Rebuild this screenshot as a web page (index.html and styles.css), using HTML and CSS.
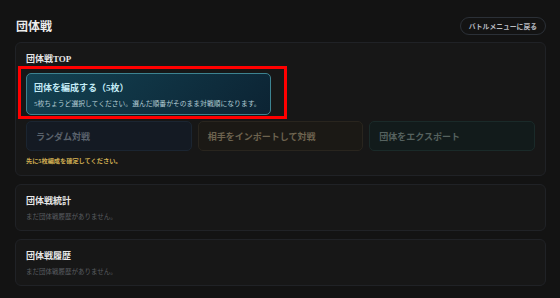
FILE: index.html
```html
<!DOCTYPE html>
<html lang="ja">
<head>
    <meta charset="UTF-8">
    <meta name="viewport" content="width=device-width, initial-scale=1.0">
    <title>団体戦</title>
    <link rel="stylesheet" href="styles.css">
</head>
<body>
    <div class="page">
        <header class="page-header">
            <h1>団体戦</h1>
            <button class="back-button">バトルメニューに戻る</button>
        </header>

        <section class="card">
            <h2 class="card-title">団体戦TOP</h2>
            <div class="compose-wrap">
                <button class="compose-button">
                    <span class="compose-title">団体を編成する（5枚）</span>
                    <span class="compose-sub">5枚ちょうど選択してください。選んだ順番がそのまま対戦順になります。</span>
                </button>
                <div class="highlight"></div>
            </div>
            <div class="action-row">
                <button class="action action-random">ランダム対戦</button>
                <button class="action action-import">相手をインポートして対戦</button>
                <button class="action action-export">団体をエクスポート</button>
            </div>
            <p class="notice">先に5枚編成を確定してください。</p>
        </section>

        <section class="card card-small">
            <h2 class="card-title">団体戦統計</h2>
            <p class="empty">まだ団体戦履歴がありません。</p>
        </section>

        <section class="card card-small">
            <h2 class="card-title">団体戦履歴</h2>
            <p class="empty">まだ団体戦履歴がありません。</p>
        </section>
    </div>
</body>
</html>
```

FILE: styles.css
```css
* {
    margin: 0;
    padding: 0;
    box-sizing: border-box;
}

body {
    font-family: "Liberation Serif", "Noto Sans CJK JP", serif;
    background: #131313;
    color: #e6e6e6;
}

.page {
    padding: 17px 14px 0 15px;
}

.page-header {
    display: flex;
    align-items: center;
    justify-content: space-between;
    height: 18px;
    margin-bottom: 7px;
}

h1 {
    font-size: 12px;
    font-weight: bold;
    color: #ececec;
    margin-left: 1px;
}

.back-button {
    height: 18px;
    padding: 0 8px;
    border: 1px solid #2b3037;
    border-radius: 9px;
    background: transparent;
    color: #b9bcc1;
    font-family: inherit;
    font-size: 6.8px;
    font-weight: bold;
}

.card {
    background: #171717;
    border: 1px solid #202226;
    border-radius: 6px;
    padding: 9px 10px 9px 10px;
    margin-bottom: 8px;
}

.card-title {
    font-size: 9px;
    font-weight: bold;
    color: #e8e8e8;
    line-height: 14px;
}

.compose-wrap {
    position: relative;
    width: 245px;
    margin-top: 7px;
}

.compose-button {
    display: flex;
    flex-direction: column;
    justify-content: center;
    gap: 4px;
    width: 100%;
    height: 42px;
    padding: 0 7px;
    text-align: left;
    border: 1px solid #3d8391;
    border-radius: 5px;
    background: linear-gradient(135deg, #134252, #0c2333);
    font-family: inherit;
    white-space: nowrap;
}

.compose-title {
    font-size: 9px;
    font-weight: bold;
    color: #c4ecf7;
}

.compose-sub {
    font-size: 6.8px;
    color: #b3ccd4;
}

.highlight {
    position: absolute;
    top: -7px;
    left: -8px;
    right: -16px;
    bottom: -4px;
    border: 3px solid #ff0000;
    pointer-events: none;
}

.action-row {
    display: grid;
    grid-template-columns: 1fr 1fr 1fr;
    gap: 6px;
    margin-top: 6px;
}

.action {
    height: 30px;
    padding: 0 9px;
    text-align: left;
    border-radius: 5px;
    font-family: inherit;
    font-size: 9px;
    font-weight: bold;
}

.action-random {
    background: #141a23;
    border: 1px solid #1b2531;
    color: #5a626c;
}

.action-import {
    background: #1b1915;
    border: 1px solid #29251e;
    color: #6d634f;
}

.action-export {
    background: #121b1b;
    border: 1px solid #1a2a29;
    color: #56625f;
}

.notice {
    margin-top: 5px;
    font-size: 6.2px;
    font-weight: bold;
    color: #cfae52;
    line-height: 10px;
}

.card-small {
    padding: 9px 10px 8px 10px;
}

.empty {
    margin-top: 4px;
    font-size: 6.5px;
    color: #5a5d61;
    line-height: 10px;
}
```
